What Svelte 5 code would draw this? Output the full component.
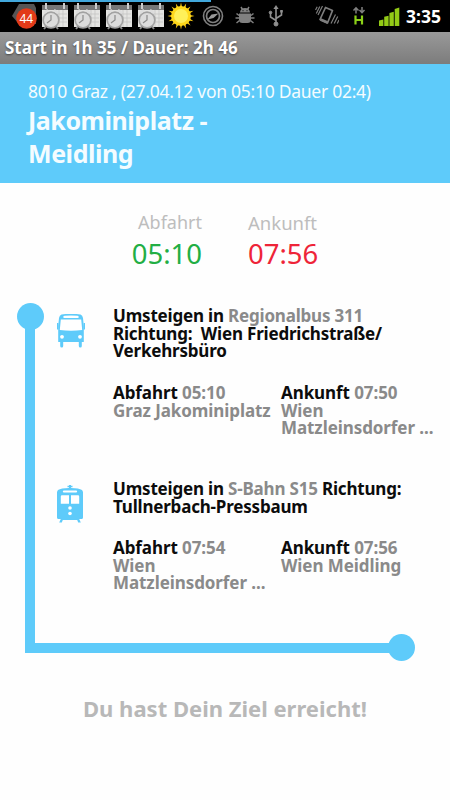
<script>
  const calendars = [0, 1, 2, 3];

  const trip = {
    info: '8010 Graz , (27.04.12 von 05:10 Dauer 02:4)',
    from: 'Jakominiplatz -',
    to: 'Meidling',
    departure: '05:10',
    arrival: '07:56'
  };

  const steps = [
    {
      icon: 'bus',
      line: 'Regionalbus 311',
      inline: '',
      direction: ['Richtung:\u00a0 Wien Friedrichstraße/', 'Verkehrsbüro'],
      departure: '05:10',
      from: ['Graz Jakominiplatz'],
      arrival: '07:50',
      to: ['Wien', 'Matzleinsdorfer ...']
    },
    {
      icon: 'train',
      line: 'S-Bahn S15',
      inline: 'Richtung:',
      direction: ['Tullnerbach-Pressbaum'],
      departure: '07:54',
      from: ['Wien', 'Matzleinsdorfer ...'],
      arrival: '07:56',
      to: ['Wien Meidling']
    }
  ];
</script>

<div class="screen">
  <div class="status-bar">
    <div class="loading"></div>
    <svg class="badge" width="26" height="26" viewBox="0 0 26 26">
      <path d="M7 1h15l2 4v16H7L0 13z" fill="#555" />
      <circle cx="14.5" cy="15.5" r="10.3" fill="#e23a18" />
      <text x="14.3" y="19.6" text-anchor="middle">44</text>
    </svg>
    {#each calendars as c (c)}
      <svg class="calendar" width="28" height="27" viewBox="0 0 28 27">
        <rect x="1" y="2" width="26" height="22" fill="#e4e4e2" />
        <rect x="1" y="2" width="26" height="5" fill="#777" />
        <path d="M5 0v6M23 0v6" stroke="#ccc" stroke-width="2" />
        <path d="M14 11h12M14 15h12M14 19h12M18 7v17M22 7v17" stroke="#c2c2c0" stroke-width=".7" />
        <circle cx="10" cy="17" r="8.700" fill="#a2a2a2" />
        <circle cx="10" cy="17" r="7" fill="#dcdcdc" />
        <path d="M10 12v5l-4 3" stroke="#8a8a8a" stroke-width="1.200" fill="none" />
        <path d="M3 10l4-3M13 7l4 3" stroke="#ddd" stroke-width="2.500" />
        <path d="M5 23.500l-2 2.500M15 23.500l2 2.500" stroke="#8d8d8d" stroke-width="2" />
      </svg>
    {/each}
    <svg class="sun" width="28" height="28" viewBox="-14 -14 28 28">
      {#each [0, 22.5, 45, 67.5, 90, 112.5, 135, 157.5] as angle}
        <path d="M0-13.500L3.200 0L0 13.500L-3.200 0z" fill="#ffce10" transform="rotate({angle})" />
      {/each}
      <circle r="10" fill="#ffd81c" />
      <circle r="7" fill="#fff05a" />
    </svg>
    <svg class="compass" width="22" height="22" viewBox="0 0 22 22" fill="none" stroke="#808080">
      <circle cx="11" cy="11" r="9.5" stroke-width="1.6" />
      <circle cx="11" cy="11" r="6.5" stroke-width="1.7" />
      <path d="M5.500 14.500l4-5 7-1-5 4.500z" fill="#999" stroke="none" />
    </svg>
    <svg class="android" width="20" height="20" viewBox="0 0 20 20" fill="#808080">
      <path d="M5 6.500a5 4.500 0 0 1 10 0zM4 7.500h12v6q0 3.500-3.500 3.500h-5Q4 17 4 13.500z" />
      <path d="M6 1l1.500 2.500M14 1l-1.500 2.500M1.500 7.500L4 9.500M18.500 7.500L16 9.500M.5 12H4M16 12h3.500M1.500 17L4.500 14.500M18.500 17l-3-2.500" stroke="#808080" stroke-width="1.500" />
      <path d="M7.500 4.700h1M11.500 4.700h1" stroke="#111" />
    </svg>
    <svg class="usb" width="16" height="22" viewBox="0 0 16 22" fill="#909090" stroke="#909090">
      <path d="M8 19V3M8 15.500L2.500 12V8M8 13.500L13.500 10V6" fill="none" stroke-width="1.6" />
      <path d="M8 0l2.600 4H5.400z" stroke="none" />
      <circle cx="8" cy="19" r="2" />
      <circle cx="2.500" cy="7.500" r="1.300" />
      <path d="M12.200 5h2.600v2.600h-2.600z" stroke="none" />
    </svg>
    <svg class="vibrate" width="24" height="22" viewBox="0 0 24 22" fill="none" stroke="#7d7d7d">
      <path d="M10.500 2.500L17.500 5.500L12.500 18L5 14.500z" stroke-width="1.700" stroke-linejoin="round" />
      <path d="M5.500 14.500l7 3" stroke-width="2.800" />
      <path d="M7.500 1L3 10M4.800 1.500L1.300 8.500M2.200 1.800L.5 5M20.500 9.500L16 18.500M22.700 11.500l-3.500 7M24 15l-1.700 3.500" stroke-width="1.200" />
    </svg>
    <svg class="network" width="14" height="20" viewBox="0 0 14 20">
      <path d="M4 7.500V2M1.500 4.500L4 1.800L6.500 4.500M10 1v5.500M7.500 4L10 6.700L12.500 4" fill="none" stroke="#808080" stroke-width="1.500" />
      <path d="M3.500 9.500V18.500M10 9.500V18.500M3.500 14H10" fill="none" stroke="#8bd018" stroke-width="2.200" />
    </svg>
    <svg class="signal" width="21" height="19" viewBox="0 0 21 19" fill="#93cb16">
      <path d="M0 13.500l4.400-1V19H0zM5.200 9.800l4.400-1V19H5.200zM10.400 6l4.400-1.200V19h-4.400zM15.700 2l4.600-1.500V19h-4.600z" />
    </svg>
    <span class="clock">3:35</span>
  </div>

  <div class="title-bar"><span>Start in 1h 35 / Dauer: 2h 46</span></div>

  <header>
    <p>{trip.info}</p>
    <h1>{trip.from}<br />{trip.to}</h1>
  </header>

  <section class="times">
    <div class="time departure">
      <span class="label">Abfahrt</span>
      <span class="value">{trip.departure}</span>
    </div>
    <div class="time arrival">
      <span class="label">Ankunft</span>
      <span class="value">{trip.arrival}</span>
    </div>
  </section>

  <section class="route">
    <div class="rail">
      <i class="dot start"></i>
      <i class="dot end"></i>
    </div>
    <div class="steps">
      {#each steps as step}
        <article class={step.icon}>
          {#if step.icon === 'bus'}
            <svg class="vehicle" width="28" height="35" viewBox="0 0 28 35">
              <path d="M4.500.5Q14-1 23.500.5Q25.500 1 26 4l.8 8v16h-2v4q0 1.500-1.500 1.500T21.800 32v-4H6.200v4q0 1.500-1.500 1.500T3.200 32v-4h-2V12L2 4Q2.500 1 4.500.5z" fill="#5ecbfa" />
              <path d="M7.500 1.800Q14 1 20.500 1.800q1.300.2 1.300 1.200t-1.300 1H7.500q-1.300 0-1.300-1t1.300-1.200zM3.800 5.500h20.400l1 10.500q-11.200 1.500-22.400 0z" fill="#fff" />
              <circle cx="5" cy="22.800" r="1.900" fill="#fff" />
              <circle cx="23" cy="22.800" r="1.900" fill="#fff" />
              <path d="M.7 9v6.500M27.300 9v6.500" stroke="#5ecbfa" stroke-width="1.400" />
            </svg>
          {:else}
            <svg class="vehicle" width="28" height="39" viewBox="0 0 28 39">
              <path d="M13 0h2v3q8 0 11 2 1 1 1 2.500v25q0 1.500-1.500 1.500h-2.300l1.600 3.500h-2.600l-1-2.500H6.800l-1 2.500H3.200L4.800 34H2.500Q1 34 1 32.500v-25Q1 6 2 5q3-2 11-2z" fill="#5ecbfa" />
              <path d="M11.500 1.500h5" stroke="#5ecbfa" stroke-width="1.500" />
              <path d="M8 5.500h12q1.200 0 1.200 1t-1.200 1H8q-1.200 0-1.200-1t1.200-1zM6 10.300h7v8.500H4.800V11.500q0-1.200 1.200-1.200zM15 10.300h7q1.200 0 1.200 1.200v7.300H15z" fill="#fff" />
              <circle cx="14" cy="23" r="1.800" fill="#fff" />
              <circle cx="14" cy="28.500" r="1.800" fill="#fff" />
            </svg>
          {/if}
          <div class="details">
            <h2>
              Umsteigen in <em>{step.line}</em> {step.inline}
              {#each step.direction as row}<br />{row}{/each}
            </h2>
            <div class="stops">
              <p>Abfahrt <em>{step.departure}{#each step.from as row}<br />{row}{/each}</em></p>
              <p>Ankunft <em>{step.arrival}{#each step.to as row}<br />{row}{/each}</em></p>
            </div>
          </div>
        </article>
      {/each}
    </div>
  </section>

  <footer><span>Du hast Dein Ziel erreicht!</span></footer>
</div>

<style>
  :global(body) {
    margin: 0;
    background: #fefefe;
  }

  .screen {
    width: 450px;
    height: 800px;
    overflow: hidden;
    background: #fefefe;
    font-family: 'Noto Sans', 'Open Sans', sans-serif;
    white-space: nowrap;
  }

  h1, h2, p {
    margin: 0;
  }

  em {
    font-style: normal;
    color: #8a8a8a;
  }

  .status-bar {
    position: relative;
    display: flex;
    align-items: center;
    box-sizing: border-box;
    height: 32px;
    padding-left: 12px;
    background: #000;
  }

  .status-bar svg {
    flex: none;
  }

  .loading {
    position: absolute;
    top: 0;
    left: 0;
    width: 211px;
    height: 2px;
    background: #42a8dc;
  }

  .badge {
    margin-right: 3px;
  }

  .badge text {
    font-size: 12px;
    fill: #fff;
  }

  .calendar {
    margin-right: 4px;
  }

  .calendar + .sun {
    margin-left: -2px;
  }

  .compass {
    margin-left: 7px;
  }

  .android {
    margin-left: 11px;
  }

  .usb {
    margin-left: 13px;
  }

  .vibrate {
    margin-left: 31px;
  }

  .network {
    margin-left: 13px;
  }

  .signal {
    margin-left: 13px;
  }

  .clock {
    margin-left: 6px;
    color: #fff;
    font-size: 17.500px;
    font-weight: 700;
    line-height: 32px;
  }

  .title-bar {
    box-sizing: border-box;
    height: 32px;
    padding-left: 5px;
    background: linear-gradient(#999, #7c7c7c);
    color: #fff;
    font-size: 17px;
    font-weight: 700;
    line-height: 31px;
    text-shadow: 0 1px 2px #444;
  }

  header {
    box-sizing: border-box;
    height: 119px;
    padding: 16px 0 0 28px;
    background: #5ecbfa;
    color: #f4fcff;
  }

  header p {
    font-size: 17.500px;
    letter-spacing: -0.270px;
    line-height: 22px;
  }

  h1 {
    padding-top: 2px;
    font-size: 25px;
    letter-spacing: -0.450px;
    line-height: 33px;
  }

  .times {
    display: flex;
    gap: 46px;
    box-sizing: border-box;
    height: 120px;
    padding: 27px 0 0 132px;
  }

  .time {
    display: flex;
    flex-direction: column;
    width: 70px;
  }

  .departure {
    align-items: flex-end;
  }

  .label {
    color: #bdbdbd;
    font-size: 18.500px;
    line-height: 25px;
  }

  .departure .label {
    font-size: 18px;
  }

  .value {
    font-size: 27.500px;
    line-height: 38px;
  }

  .departure .value {
    color: #22ae44;
  }

  .arrival .value {
    color: #ee2438;
  }

  .route {
    display: grid;
    height: 350px;
  }

  .rail,
  .steps {
    grid-area: 1 / 1;
  }

  .rail {
    position: relative;
    box-sizing: border-box;
    width: 376px;
    height: 336px;
    margin: 14px 0 0 25px;
    border: solid #5ecbfa;
    border-width: 0 0 10px 10px;
  }

  .dot {
    position: absolute;
    width: 27px;
    height: 27px;
    border-radius: 50%;
    background: #5ecbfa;
  }

  .start {
    top: -14px;
    left: -18px;
  }

  .end {
    right: -14px;
    bottom: -18px;
  }

  .steps {
    padding: 4px 0 0 56px;
  }

  article {
    display: flex;
    align-items: flex-start;
    height: 173px;
  }

  .vehicle {
    flex: none;
    width: 28px;
    margin: 7px 28px 0 1px;
  }

  .train .vehicle {
    margin: 5px 29px 0 0;
  }

  h2,
  .stops {
    color: #0c0c0c;
    font-size: 17px;
    font-weight: 700;
    line-height: 17.500px;
  }

  h2 {
    letter-spacing: -0.190px;
  }

  .bus h2 {
    height: 77px;
  }

  .train h2 {
    height: 59px;
  }

  .stops {
    display: grid;
    grid-template-columns: 168px 160px;
    letter-spacing: -0.080px;
  }

  footer {
    padding: 39px 0 0 83px;
    color: #b8b8b8;
    font-size: 22px;
    font-weight: 700;
    line-height: 32px;
  }
</style>
